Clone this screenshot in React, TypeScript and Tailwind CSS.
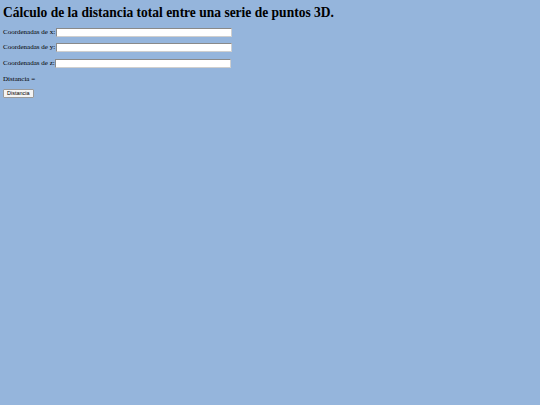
export default function App() {
  const rows = ['x', 'y', 'z']
  return (
    <div className="min-h-[405px] w-full bg-[#95b5dc] px-[3px] pt-[3px] text-black [font-family:'Liberation_Serif',serif]">
      <h1 className="origin-left scale-x-[0.9] whitespace-nowrap text-[15px] leading-[18px] font-bold">
        Cálculo de la distancia total entre una serie de puntos 3D.
      </h1>
      <div className="mt-[6px] flex flex-col gap-[5.5px]">
        {rows.map((r) => (
          <div key={r} className="flex items-center h-[10px] text-[7px]">
            <span>Coordenadas de {r}:</span>
            <input
              type="text"
              className="ml-[0.5px] h-[9px] w-[176px] bg-white border border-[#8a8a8a] border-b-[#cfcfcf] border-r-[#cfcfcf]"
            />
          </div>
        ))}
      </div>
      <p className="mt-[6px] text-[7px] leading-[10px]">Distancia =</p>
      <button className="mt-[5px] block h-[9px] px-[3px] text-[5.5px] leading-none bg-[#f4f4f4] border border-[#9a9a9a] rounded-[1px] [font-family:'Liberation_Sans',sans-serif]">
        Distancia
      </button>
    </div>
  )
}
